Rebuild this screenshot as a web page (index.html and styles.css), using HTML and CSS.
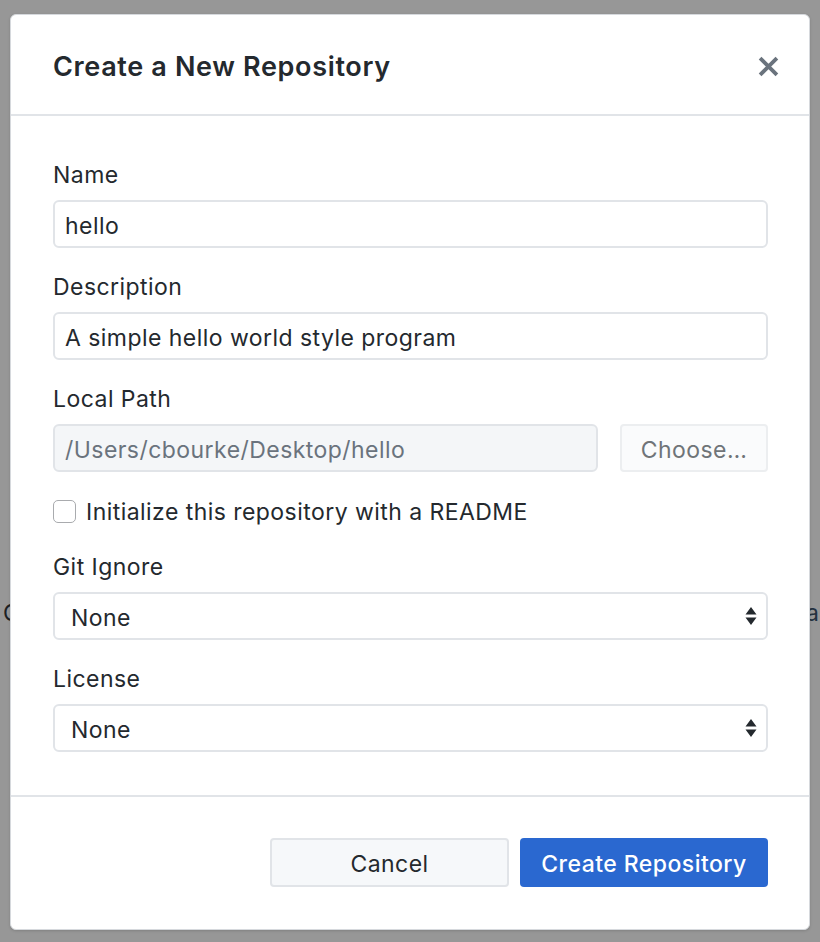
FILE: index.html
```html
<!DOCTYPE html>
<html lang="en">
<head>
<meta charset="utf-8">
<title>Create a New Repository</title>
<link rel="stylesheet" href="styles.css">
</head>
<body>
<div class="backdrop">
  <div class="behind-row"><span>C</span><span class="behind-a">a</span></div>
</div>
<div class="dialog">
  <header class="dialog-header">
    <h1 class="title">Create a New Repository</h1>
    <button class="close" aria-label="Close">
      <svg width="21" height="21" viewBox="0 0 20 20"><path d="M2 2 L18 18 M18 2 L2 18" stroke="#6a737d" stroke-width="3.6" stroke-linecap="butt"/></svg>
    </button>
  </header>
  <div class="dialog-body">
    <div class="field">
      <label class="label">Name</label>
      <div class="input">hello</div>
    </div>
    <div class="field">
      <label class="label">Description</label>
      <div class="input">A simple hello world style program</div>
    </div>
    <div class="field">
      <label class="label">Local Path</label>
      <div class="path-row">
        <div class="input input-disabled">/Users/cbourke/Desktop/hello</div>
        <button class="btn-choose">Choose…</button>
      </div>
    </div>
    <div class="check-row">
      <span class="checkbox"></span>
      <span class="check-label">Initialize this repository with a README</span>
    </div>
    <div class="field">
      <label class="label">Git Ignore</label>
      <div class="input select"><span>None</span>
        <svg class="arrows" width="12" height="20" viewBox="0 0 12 20"><path d="M6 1 L11.5 8.5 L0.5 8.5 Z M6 19 L11.5 11.5 L0.5 11.5 Z" fill="#24292e"/></svg>
      </div>
    </div>
    <div class="field">
      <label class="label">License</label>
      <div class="input select"><span>None</span>
        <svg class="arrows" width="12" height="20" viewBox="0 0 12 20"><path d="M6 1 L11.5 8.5 L0.5 8.5 Z M6 19 L11.5 11.5 L0.5 11.5 Z" fill="#24292e"/></svg>
      </div>
    </div>
  </div>
  <footer class="dialog-footer">
    <button class="btn btn-cancel">Cancel</button>
    <button class="btn btn-primary">Create Repository</button>
  </footer>
</div>
</body>
</html>
```
FILE: styles.css
```css
* { box-sizing: border-box; }
html, body {
  margin: 0;
  padding: 0;
}
body {
  width: 820px;
  height: 942px;
  background: #979797;
  font-family: Inter, "Noto Sans", "Liberation Sans", sans-serif;
  color: #24292e;
  position: relative;
  overflow: hidden;
}
.backdrop {
  padding-top: 598px;
}
.behind-row {
  display: flex;
  justify-content: space-between;
  padding: 0 1px 0 3px;
  font-size: 23px;
  line-height: 30px;
  color: #1d2023;
}
.behind-a { color: #24313f; }

.dialog {
  position: absolute;
  left: 10px;
  top: 14px;
  width: 800px;
  height: 916px;
  background: #fff;
  border: 1px solid #d6d9dd;
  border-radius: 6px;
  box-shadow: 0 1px 3px rgba(0,0,0,0.15);
  display: flex;
  flex-direction: column;
}
.dialog-header {
  height: 101px;
  border-bottom: 2px solid #e1e4e8;
  display: flex;
  align-items: center;
  justify-content: space-between;
  padding: 3px 30px 0 42px;
}
.title {
  margin: 0;
  font-size: 27px;
  font-weight: 600;
  letter-spacing: 0.65px;
  color: #24292e;
}
.close {
  border: 0;
  background: none;
  padding: 0;
  width: 21px;
  height: 21px;
  display: flex;
}
.dialog-body {
  padding: 46px 41px 43px 42px;
  border-bottom: 2px solid #e1e4e8;
  display: flex;
  flex-direction: column;
}
.field {
  display: flex;
  flex-direction: column;
  gap: 12px;
  margin-bottom: 26px;
}
.field:last-child { margin-bottom: 0; }
.label {
  font-size: 23px;
  letter-spacing: 0.45px;
  line-height: 26px;
  color: #24292e;
}
.input {
  height: 48px;
  border: 2px solid #e1e4e8;
  border-radius: 6px;
  padding: 4px 10px 0;
  font-size: 23px;
  letter-spacing: 0.45px;
  display: flex;
  align-items: center;
  color: #24292e;
  background: #fff;
}
.path-row {
  display: flex;
  gap: 22px;
}
.input-disabled {
  flex: 1;
  background: #f4f6f8;
  color: #6a737d;
}
.btn-choose {
  width: 148px;
  height: 48px;
  border: 2px solid #eceef0;
  border-radius: 4px;
  background: #fafbfc;
  font-family: inherit;
  font-size: 23px;
  letter-spacing: 0.45px;
  color: #6f7478;
  padding: 4px 0 0;
}
.check-row {
  display: flex;
  align-items: center;
  gap: 10px;
  margin: 2px 0 32px;
  height: 22px;
}
.checkbox {
  width: 23px;
  height: 23px;
  border: 1.5px solid #a9abae;
  border-radius: 5px;
  background: #fff;
}
.check-label {
  font-size: 23px;
  letter-spacing: 0.45px;
  line-height: 26px;
  padding-top: 2px;
}
.select {
  justify-content: space-between;
  padding: 0 9px 0 16px;
}
.select span { padding-top: 4px; }
.arrows { display: block; }
.dialog-footer {
  flex: 1;
  display: flex;
  justify-content: flex-end;
  align-items: flex-start;
  padding: 41px 41px 0 0;
  gap: 11px;
}
.btn {
  height: 49px;
  border-radius: 4px;
  font-family: inherit;
  font-size: 23px;
  letter-spacing: 0.45px;
  padding: 3px 0 0;
}
.btn-cancel {
  width: 239px;
  background: #f6f8fa;
  border: 2px solid #e1e4e8;
  color: #24292e;
}
.btn-primary {
  width: 248px;
  background: #2a68d0;
  border: 0;
  color: #fff;
  font-weight: 500;
}
```
